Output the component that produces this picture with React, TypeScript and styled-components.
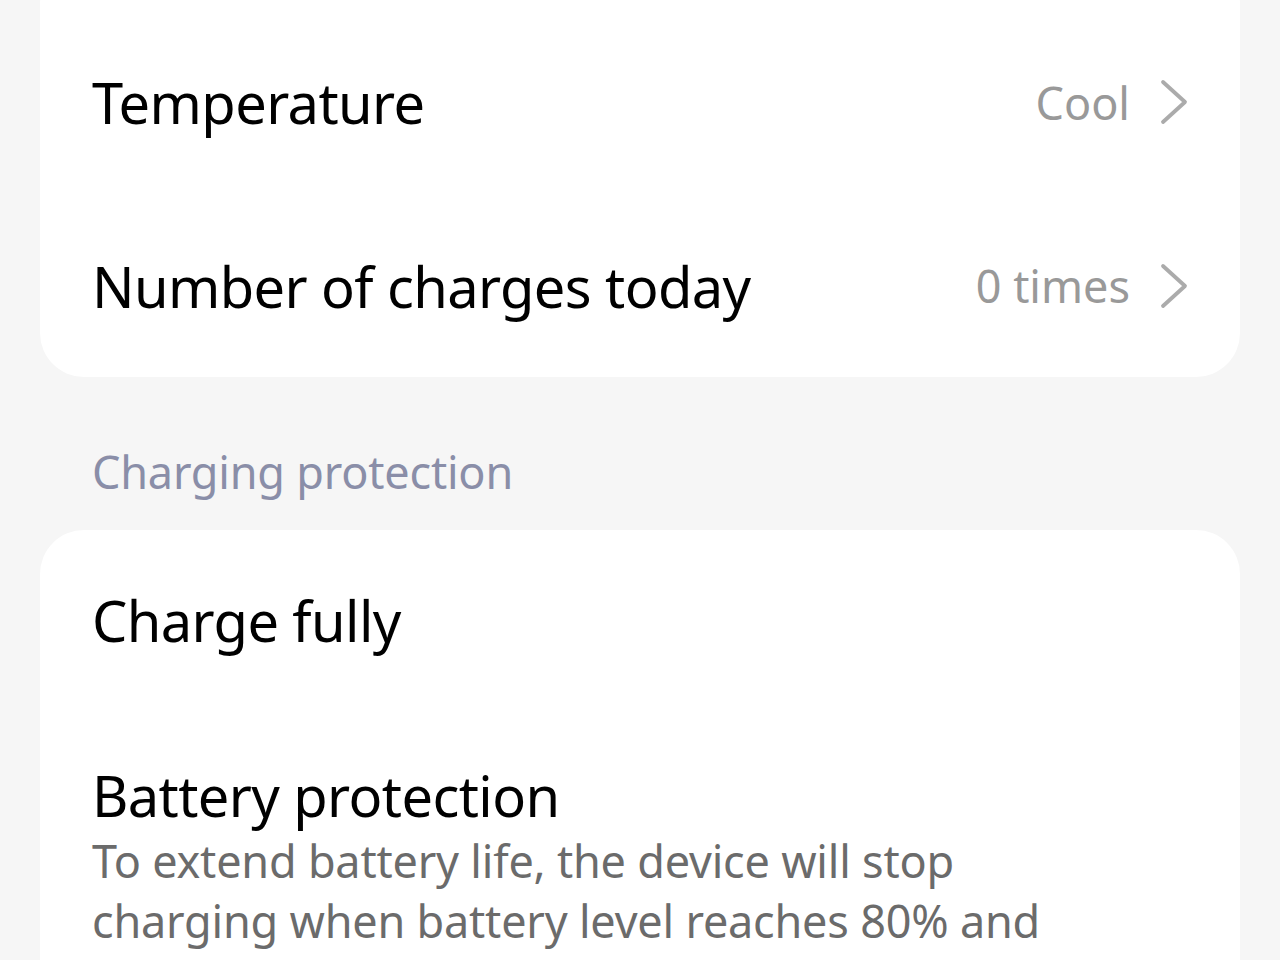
import styled, { createGlobalStyle } from "styled-components";

const GlobalStyle = createGlobalStyle`
  html, body {
    margin: 0;
    padding: 0;
    background: #f6f6f6;
  }
  body {
    font-family: "Noto Sans", "Open Sans", sans-serif;
    overflow: hidden;
  }
`;

const Page = styled.div`
  width: 1280px;
  height: 960px;
  overflow: hidden;
  background: #f6f6f6;
`;

// the list is scrolled a little, so the first card starts above the window
const Scroller = styled.div`
  display: flex;
  flex-direction: column;
  margin-top: -40px;
  padding: 0 40px;
`;

const Card = styled.div<{ $padTop?: number }>`
  background: #ffffff;
  border-radius: 44px;
  padding: ${(p) => p.$padTop ?? 0}px 52px 0;
  display: flex;
  flex-direction: column;
`;

const Row = styled.div<{ $height: number }>`
  height: ${(p) => p.$height}px;
  display: flex;
  align-items: center;
  justify-content: space-between;
`;

const Title = styled.span`
  font-size: 56px;
  line-height: 60px;
  color: #000;
  letter-spacing: -0.6px;
`;

const Value = styled.span`
  display: flex;
  align-items: center;
  gap: 30px;
  font-size: 45px;
  color: #999999;
`;

const SectionLabel = styled.div`
  padding: 66px 52px 29px;
  font-size: 45px;
  line-height: 58px;
  letter-spacing: -0.2px;
  color: #8a8ea8;
`;

const TextBlock = styled.div`
  display: flex;
  flex-direction: column;
  padding-top: 55px;
`;

const Desc = styled.p`
  margin: 6px 0 0;
  font-size: 45px;
  line-height: 60px;
  letter-spacing: -0.2px;
  color: #6b6b6b;
`;

function Chevron() {
  return (
    <svg width="28" height="46" viewBox="0 0 28 46" fill="none">
      <path d="M3 3 L25 23 L3 43" stroke="#ababab" strokeWidth="3.8" strokeLinecap="round" strokeLinejoin="round" />
    </svg>
  );
}

export default function App() {
  return (
    <Page>
      <GlobalStyle />
      <Scroller>
        <Card $padTop={50}>
          <Row $height={184}>
            <Title>Temperature</Title>
            <Value>
              Cool
              <Chevron />
            </Value>
          </Row>
          <Row $height={183}>
            <Title>Number of charges today</Title>
            <Value>
              0 times
              <Chevron />
            </Value>
          </Row>
        </Card>
        <SectionLabel>Charging protection</SectionLabel>
        <Card>
          <Row $height={180}>
            <Title>Charge fully</Title>
          </Row>
          <TextBlock>
            <Title>Battery protection</Title>
            <Desc>
              To extend battery life, the device will stop
              <br />
              charging when battery level reaches 80% and
              <br />
              will resume charging when it drops below 75%.
            </Desc>
          </TextBlock>
        </Card>
      </Scroller>
    </Page>
  );
}
